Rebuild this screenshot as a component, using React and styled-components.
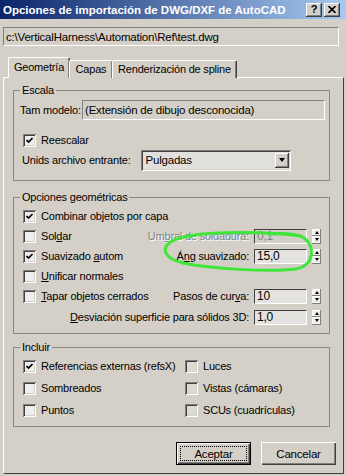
import React from "react";
import styled, { createGlobalStyle } from "styled-components";

const GlobalStyle = createGlobalStyle`
  html, body {
    margin: 0;
    padding: 0;
    background: #d4d0c8;
  }
  body {
    font-family: "Liberation Sans", Arial, sans-serif;
    font-size: 11px;
    letter-spacing: -0.2px;
    color: #000;
  }
`;

const Window = styled.div`
  position: relative;
  width: 346px;
  height: 476px;
  background: #d4d0c8;
  display: flex;
  flex-direction: column;
  overflow: hidden;
`;

const TitleBar = styled.div`
  height: 19px;
  flex: none;
  display: flex;
  align-items: center;
  justify-content: space-between;
  padding: 0 6px 0 3px;
  background: linear-gradient(to right, #0a246a, #a6caf0);
`;

const TitleText = styled.span`
  color: #fff;
  font-weight: bold;
  font-size: 11.5px;
  letter-spacing: 0;
  white-space: nowrap;
`;

const CaptionButtons = styled.div`
  display: flex;
  gap: 2px;
`;

const CaptionButton = styled.div`
  width: 16px;
  height: 14px;
  box-sizing: border-box;
  background: #d4d0c8;
  box-shadow: inset -1px -1px #404040, inset 1px 1px #fff,
    inset -2px -2px #808080, inset 2px 2px #d4d0c8;
  display: flex;
  align-items: center;
  justify-content: center;
  font-weight: bold;
  font-size: 11px;
  line-height: 1;
`;

const Body = styled.div`
  flex: 1;
  display: flex;
  flex-direction: column;
  padding: 0 2px 2px 3px;
`;

const PathField = styled.div`
  margin-top: 8px;
  height: 19px;
  box-sizing: border-box;
  border: 1px solid;
  border-color: #808080 #fff #fff #808080;
  padding-left: 2px;
  display: flex;
  align-items: center;
  margin-right: 5px;
  font-size: 11.5px;
`;

const TabStrip = styled.div`
  display: flex;
  align-items: flex-end;
  margin-top: 12px;
  padding-left: 5px;
  height: 20px;
  margin-bottom: -1px;
  position: relative;
  z-index: 1;
`;

const Tab = styled.div`
  width: ${(p) => p.$w}px;
  height: ${(p) => (p.$active ? 21 : 18)}px;
  box-sizing: border-box;
  padding: ${(p) => (p.$active ? "3px" : "2px")} 0 0 0;
  text-align: center;
  border-top: 1px solid #fff;
  border-left: 1px solid #fff;
  border-right: 1px solid #404040;
  border-radius: 2px 2px 0 0;
  box-shadow: inset -1px 0 #808080;
  background: #d4d0c8;
  margin-left: ${(p) => (p.$active ? 0 : -1)}px;
  font-size: 11px;
  white-space: nowrap;
`;

const Panel = styled.div`
  flex: 1;
  display: flex;
  flex-direction: column;
  border-top: 1px solid #fff;
  border-left: 1px solid #fff;
  border-right: 1px solid #404040;
  border-bottom: 1px solid #404040;
  padding: 6px 13px 0 9px;
`;

const Group = styled.fieldset`
  margin: ${(p) => p.$mt || 0}px 0 0 0;
  padding: ${(p) => p.$pt}px ${(p) => p.$pr}px ${(p) => p.$pb}px 6px;
  border: 1px solid #888;
  min-width: 0;
`;

const Legend = styled.legend`
  padding: 0 2px;
  line-height: 12px;
  font-size: 11px;
`;

const Row = styled.div`
  display: flex;
  align-items: center;
  height: ${(p) => p.$h || 20}px;
  margin-top: ${(p) => p.$mt || 0}px;
`;

const Label = styled.span`
  white-space: nowrap;
  font-size: 11px;
  color: ${(p) => (p.$disabled ? "#808080" : "#000")};
  text-shadow: ${(p) => (p.$disabled ? "1px 1px #fff" : "none")};
  margin-left: ${(p) => p.$ml || 0}px;
`;

const ReadField = styled.div`
  margin-left: auto;
  width: 243px;
  height: 20px;
  box-sizing: border-box;
  border: 1px solid;
  border-color: #808080 #fff #fff #808080;
  padding-left: 2px;
  display: flex;
  align-items: center;
  font-size: 11.5px;
`;

const Select = styled.div`
  margin-left: ${(p) => p.$ml}px;
  width: 150px;
  height: 21px;
  box-sizing: border-box;
  background: #e2e0dc;
  box-shadow: inset 1px 1px #808080, inset -1px -1px #fff,
    inset 2px 2px #404040, inset -2px -2px #d4d0c8;
  display: flex;
  align-items: center;
  padding: 0 2px 0 5px;
  font-size: 11.5px;
`;

const DropButton = styled.div`
  margin-left: auto;
  width: 14px;
  height: 15px;
  box-sizing: border-box;
  background: #d4d0c8;
  box-shadow: inset -1px -1px #404040, inset 1px 1px #fff,
    inset -2px -2px #808080;
  display: flex;
  align-items: center;
  justify-content: center;

  &::after {
    content: "";
    border-left: 3.5px solid transparent;
    border-right: 3.5px solid transparent;
    border-top: 4px solid #000;
  }
`;

const CheckBox = styled.span`
  flex: none;
  width: 13px;
  height: 13px;
  box-sizing: border-box;
  margin: 0 5px 0 3px;
  background: ${(p) => (p.$dim ? "#dcdad5" : "#eeeeec")};
  box-shadow: inset 1px 1px #808080, inset -1px -1px #fff,
    inset 2px 2px #404040, inset -2px -2px #d4d0c8;
  display: flex;
  align-items: center;
  justify-content: center;
`;

const CheckItem = styled.div`
  display: flex;
  align-items: center;
`;

const Check = ({ checked, dim, children }) => (
  <CheckItem>
    <CheckBox $dim={dim}>
      {checked && (
        <svg width="7" height="7" viewBox="0 0 7 7">
          <path d="M0.5 3 L2.5 5 L6.5 1" fill="none" stroke="#000" strokeWidth="1.7" />
        </svg>
      )}
    </CheckBox>
    <Label>{children}</Label>
  </CheckItem>
);

const SpinGroup = styled.div`
  margin-left: auto;
  display: flex;
  align-items: center;
  gap: 5px;
`;

const SpinField = styled.div`
  width: 53px;
  height: 15px;
  box-sizing: border-box;
  border: 1px solid;
  border-color: #404040 #fff #fff #404040;
  background: ${(p) => (p.$disabled ? "#d4d0c8" : "#e4e2de")};
  color: ${(p) => (p.$disabled ? "#808080" : "#000")};
  padding-left: 2px;
  font-size: 12px;
  line-height: 13px;
`;

const Spinner = styled.div`
  width: 9px;
  height: 15px;
  display: flex;
  flex-direction: column;
`;

const SpinHalf = styled.div`
  flex: 1;
  background: #f0efec;
  box-shadow: inset -1px -1px #808080, inset 1px 1px #fff;
  display: flex;
  align-items: center;
  justify-content: center;

  &::after {
    content: "";
    border-left: 2.5px solid transparent;
    border-right: 2.5px solid transparent;
    ${(p) => (p.$up ? "border-bottom" : "border-top")}: 3px solid #000;
  }
`;

const Spin = ({ label, value, disabled }) => (
  <SpinGroup>
    <Label $disabled={disabled}>{label}</Label>
    <SpinField $disabled={disabled}>{value}</SpinField>
    <Spinner>
      <SpinHalf $up />
      <SpinHalf />
    </Spinner>
  </SpinGroup>
);

const IncludeGrid = styled.div`
  display: grid;
  grid-template-columns: 162px auto;
  grid-auto-rows: 22px;
  align-items: center;
`;

const ButtonRow = styled.div`
  display: flex;
  justify-content: flex-end;
  gap: 10px;
  margin: 15px -6px 0 0;
`;

const Button = styled.div`
  width: ${(p) => p.$w}px;
  height: 23px;
  box-sizing: border-box;
  display: flex;
  align-items: center;
  justify-content: center;
  font-size: 11.5px;
  background: #d4d0c8;
  position: relative;
  box-shadow: ${(p) =>
    p.$default
      ? "inset 1px 1px #000, inset -1px -1px #000, inset 2px 2px #fff, inset -2px -2px #404040, inset -3px -3px #808080"
      : "inset 1px 1px #fff, inset -1px -1px #404040, inset -2px -2px #808080"};
`;

const FocusRing = styled.span`
  position: absolute;
  inset: 4px;
  border: 1px dotted #000;
`;

const Annotation = styled.svg`
  position: absolute;
  left: 0;
  top: 0;
  pointer-events: none;
`;

export default function App() {
  return (
    <>
      <GlobalStyle />
      <Window>
        <TitleBar>
          <TitleText>Opciones de importación de DWG/DXF de AutoCAD</TitleText>
          <CaptionButtons>
            <CaptionButton>?</CaptionButton>
            <CaptionButton>
              <svg width="8" height="7" viewBox="0 0 8 7">
                <path d="M0.5 0 L7.5 7 M7.5 0 L0.5 7" stroke="#000" strokeWidth="1.6" />
              </svg>
            </CaptionButton>
          </CaptionButtons>
        </TitleBar>
        <Body>
          <PathField>c:\VerticalHarness\Automation\Ref\test.dwg</PathField>
          <TabStrip>
            <Tab $active $w={62}>Geometría</Tab>
            <Tab $w={44}>Capas</Tab>
            <Tab $w={125}>Renderización de spline</Tab>
          </TabStrip>
          <Panel>
            <Group $pt={4} $pr={4} $pb={10}>
              <Legend>Escala</Legend>
              <Row>
                <Label>Tam modelo:</Label>
                <ReadField>(Extensión de dibujo desconocida)</ReadField>
              </Row>
              <Row $mt={10}>
                <Check checked>Reescalar</Check>
              </Row>
              <Row>
                <Label $ml={2}>Unids archivo entrante:</Label>
                <Select $ml={10}>
                  Pulgadas
                  <DropButton />
                </Select>
              </Row>
            </Group>

            <Group $mt={10} $pt={3} $pr={8} $pb={6}>
              <Legend>Opciones geométricas</Legend>
              <Row>
                <Check checked>Combinar objetos por capa</Check>
              </Row>
              <Row>
                <Check>
                  Sol<u>d</u>ar
                </Check>
                <Spin
                  disabled
                  label={
                    <>
                      Um<u>b</u>ral de soldadura:
                    </>
                  }
                  value="0,1"
                />
              </Row>
              <Row>
                <Check checked>
                  Suavizado <u>a</u>utom
                </Check>
                <Spin
                  label={
                    <>
                      Á<u>n</u>g suavizado:
                    </>
                  }
                  value="15,0"
                />
              </Row>
              <Row>
                <Check>
                  <u>U</u>nificar normales
                </Check>
              </Row>
              <Row>
                <Check>
                  <u>T</u>apar objetos cerrados
                </Check>
                <Spin
                  label={
                    <>
                      Pasos de cur<u>v</u>a:
                    </>
                  }
                  value="10"
                />
              </Row>
              <Row $mt={1}>
                <Spin
                  label={
                    <>
                      <u>D</u>esviación superficie para sólidos 3D:
                    </>
                  }
                  value="1,0"
                />
              </Row>
            </Group>

            <Group $mt={7} $pt={2} $pr={4} $pb={5}>
              <Legend>Incluir</Legend>
              <IncludeGrid>
                <Check checked>Referencias externas (refsX)</Check>
                <Check dim>Luces</Check>
                <Check>Sombreados</Check>
                <Check dim>Vistas (cámaras)</Check>
                <Check>Puntos</Check>
                <Check dim>SCUs (cuadrículas)</Check>
              </IncludeGrid>
            </Group>

            <ButtonRow>
              <Button $default $w={75}>
                Aceptar
                <FocusRing />
              </Button>
              <Button $w={75}>Cancelar</Button>
            </ButtonRow>
          </Panel>
        </Body>
        <Annotation width="346" height="476" viewBox="0 0 346 476">
          <path
            d="M301 236 C265 231 205 231 180 238 C160 244 160 257 183 263 C212 269 268 272 296 269 C314 266 316 246 304 238 C296 233 283 233 268 234"
            fill="none"
            stroke="#3fe63a"
            strokeWidth="3"
            strokeLinecap="round"
          />
        </Annotation>
      </Window>
    </>
  );
}
